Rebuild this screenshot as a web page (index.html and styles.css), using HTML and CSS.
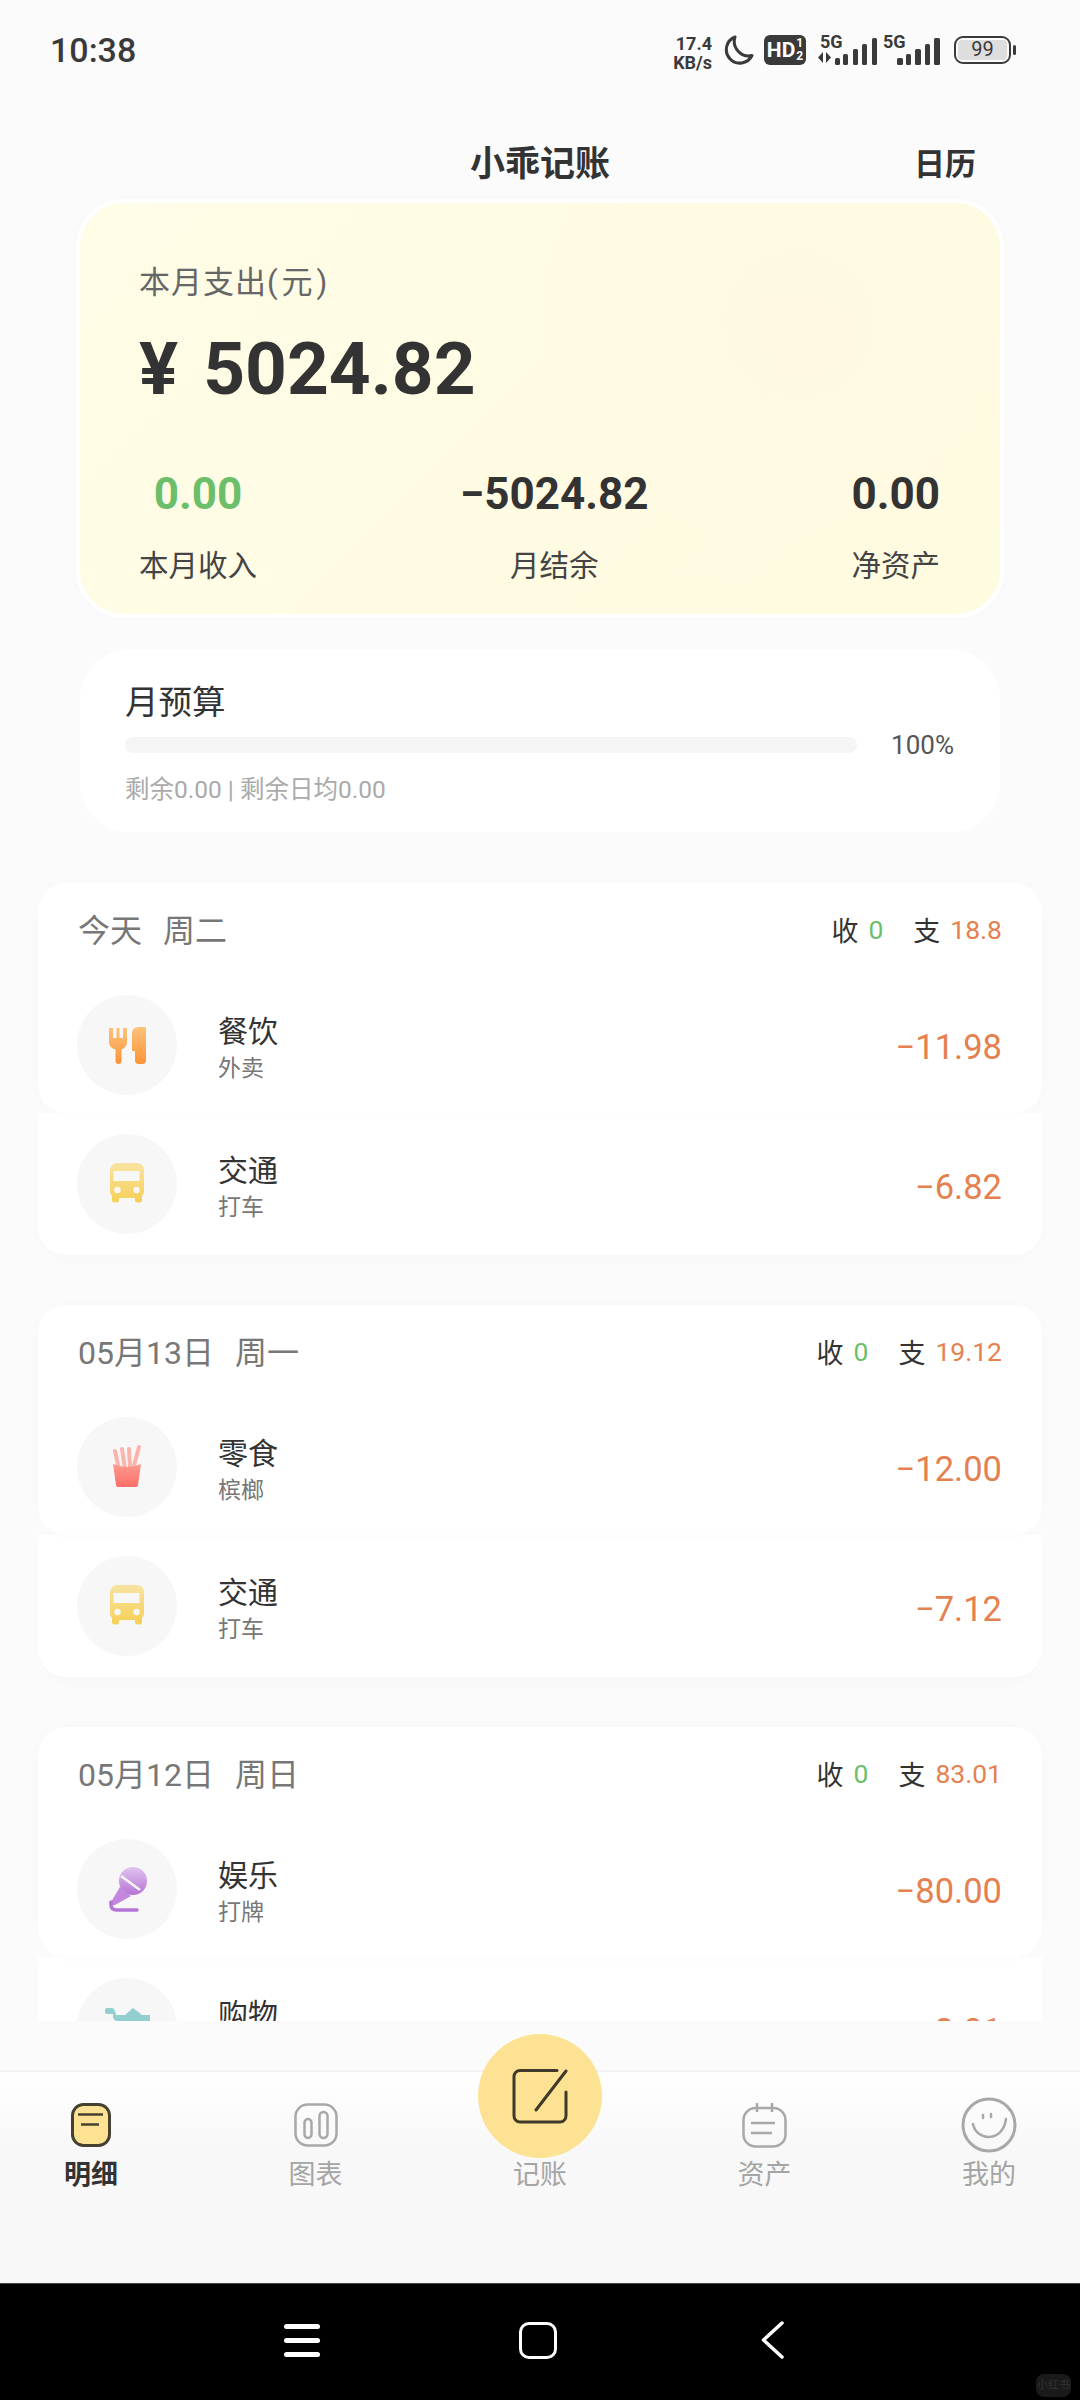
FILE: index.html
```html
<!DOCTYPE html>
<html lang="zh-CN">
<head>
    <meta charset="UTF-8">
    <meta name="viewport" content="width=device-width, initial-scale=1.0">
    <title>小乖记账</title>
    <link rel="stylesheet" href="styles.css">
</head>
<body>

<svg class="defs" width="0" height="0">
    <defs>
        <linearGradient id="grad-food" x1="0" y1="0" x2="0" y2="1"><stop offset="0" stop-color="#fdc27a"/><stop offset="1" stop-color="#fb9338"/></linearGradient>
        <linearGradient id="grad-bus" x1="0" y1="0" x2="0" y2="1"><stop offset="0" stop-color="#f8e3a2"/><stop offset="1" stop-color="#f6d25e"/></linearGradient>
        <linearGradient id="grad-fries" x1="0" y1="0" x2="0" y2="1"><stop offset="0" stop-color="#fd9a90"/><stop offset="1" stop-color="#fb6f68"/></linearGradient>
        <linearGradient id="grad-mic" x1="0" y1="0" x2="0" y2="1"><stop offset="0" stop-color="#e0c4ee"/><stop offset="1" stop-color="#b673d6"/></linearGradient>
        <symbol id="icon-bus" viewBox="0 0 100 100">
            <rect x="35" y="60" width="7" height="8.5" rx="2.5" fill="#f5d15c"/>
            <rect x="58" y="60" width="7" height="8.5" rx="2.5" fill="#f5d15c"/>
            <rect x="33" y="29" width="34" height="35" rx="7" fill="url(#grad-bus)"/>
            <rect x="36.5" y="37" width="26" height="10" fill="#f7f7f7"/>
            <circle cx="40.5" cy="56" r="3.2" fill="#f7f7f7"/>
            <circle cx="59.5" cy="56" r="3.2" fill="#f7f7f7"/>
        </symbol>
    </defs>
</svg>

<div class="status-bar">
    <span class="time">10:38</span>
    <div class="status-icons">
        <div class="speed"><span>17.4</span><span>KB/s</span></div>
        <svg class="moon" width="32" height="30" viewBox="0 0 32 30"><path d="M13 2A13.5 13.5 0 1 0 30 20.5 14.5 14.5 0 0 1 13 2z" fill="none" stroke="#3a3a3a" stroke-width="3" stroke-linejoin="round"/></svg>
        <div class="hd"><span>HD</span><span class="hd-nums"><i>1</i><i>2</i></span></div>
        <div class="signal sig-one">
            <span class="five-g">5G</span>
            <svg width="60" height="28" viewBox="0 0 60 28">
                <path d="M6 15v11l-5-5.500zM9 15v11l5-5.500z" fill="#3a3a3a"/>
                <rect x="18" y="21" width="5" height="7" rx="1.5" fill="#3a3a3a"/>
                <rect x="26" y="17" width="5" height="11" rx="1.5" fill="#3a3a3a"/>
                <rect x="36" y="12" width="5" height="16" rx="1.5" fill="#3a3a3a"/>
                <rect x="45" y="7" width="5" height="21" rx="1.5" fill="#3a3a3a"/>
                <rect x="55" y="1" width="5" height="27" rx="1.5" fill="#3a3a3a"/>
            </svg>
        </div>
        <div class="signal sig-two">
            <span class="five-g">5G</span>
            <svg width="43" height="28" viewBox="0 0 43 28">
                <rect x="0" y="21" width="6" height="7" rx="1.5" fill="#3a3a3a"/>
                <rect x="9" y="17" width="5" height="11" rx="1.5" fill="#3a3a3a"/>
                <rect x="18" y="12" width="6" height="16" rx="1.5" fill="#3a3a3a"/>
                <rect x="28" y="7" width="5" height="21" rx="1.5" fill="#3a3a3a"/>
                <rect x="37" y="1" width="6" height="27" rx="1.5" fill="#3a3a3a"/>
            </svg>
        </div>
        <div class="battery"><div class="battery-body"><span>99</span></div><div class="battery-nub"></div></div>
    </div>
</div>

<div class="top-bar">
    <span></span>
    <span class="app-title">小乖记账</span>
    <span class="calendar-link">日历</span>
</div>

<div class="hero-card">
    <div class="hero-label">本月支出<span class="paren">(元)</span></div>
    <div class="hero-amount"><span class="yen">¥</span>5024.82</div>
    <div class="hero-stats">
        <div class="stat"><div class="stat-num green">0.00</div><div class="stat-label">本月收入</div></div>
        <div class="stat"><div class="stat-num">−5024.82</div><div class="stat-label">月结余</div></div>
        <div class="stat"><div class="stat-num">0.00</div><div class="stat-label">净资产</div></div>
    </div>
</div>

<div class="budget-card">
    <div class="budget-title">月预算</div>
    <div class="budget-row">
        <div class="budget-bar"></div>
        <span class="budget-pct">100%</span>
    </div>
    <div class="budget-sub">剩余0.00 | 剩余日均0.00</div>
</div>

<div class="list">

    <div class="day">
        <div class="day-top">
            <div class="day-head">
                <div class="day-date"><span>今天</span><span>周二</span></div>
                <div class="day-sum"><span>收</span><span class="sum-in">0</span><span class="sum-out-label">支</span><span class="sum-out">18.8</span></div>
            </div>
            <div class="row">
                <div class="cat-icon">
                    <svg width="100" height="100" viewBox="0 0 100 100"><path d="M32 33h4v10h3.500V33h3v10H46V33h4v14c0 4-3 6.500-5.500 7.500V66a3 3 0 0 1-6 0V54.500C35 53.500 32 51 32 47z" fill="url(#grad-food)"/><path d="M55 38c0-4 3-6 8-6h5a1 1 0 0 1 1 1v32a4 4 0 0 1-4 4h-3a4 4 0 0 1-4-4V56h-3z" fill="url(#grad-food)"/></svg>
                </div>
                <div class="row-text"><div class="row-name">餐饮</div><div class="row-sub">外卖</div></div>
                <div class="row-amount">−11.98</div>
            </div>
        </div>
        <div class="day-bottom">
            <div class="row">
                <div class="cat-icon"><svg width="100" height="100"><use href="#icon-bus"/></svg></div>
                <div class="row-text"><div class="row-name">交通</div><div class="row-sub">打车</div></div>
                <div class="row-amount">−6.82</div>
            </div>
        </div>
    </div>

    <div class="day">
        <div class="day-top">
            <div class="day-head">
                <div class="day-date"><span>05月13日</span><span>周一</span></div>
                <div class="day-sum"><span>收</span><span class="sum-in">0</span><span class="sum-out-label">支</span><span class="sum-out">19.12</span></div>
            </div>
            <div class="row">
                <div class="cat-icon">
                    <svg width="100" height="100" viewBox="0 0 100 100"><g stroke="#fab4ae" stroke-width="4" stroke-linecap="round" fill="none"><path d="M38 34l4 18"/><path d="M45 32l3 20"/><path d="M52 32l1 20"/><path d="M62 30l-6 22"/></g><path d="M36 47q14 6 28 0l-3 21a2 2 0 0 1-2 2H41a2 2 0 0 1-2-2z" fill="url(#grad-fries)"/></svg>
                </div>
                <div class="row-text"><div class="row-name">零食</div><div class="row-sub">槟榔</div></div>
                <div class="row-amount">−12.00</div>
            </div>
        </div>
        <div class="day-bottom">
            <div class="row">
                <div class="cat-icon"><svg width="100" height="100"><use href="#icon-bus"/></svg></div>
                <div class="row-text"><div class="row-name">交通</div><div class="row-sub">打车</div></div>
                <div class="row-amount">−7.12</div>
            </div>
        </div>
    </div>

    <div class="day">
        <div class="day-top">
            <div class="day-head">
                <div class="day-date"><span>05月12日</span><span>周日</span></div>
                <div class="day-sum"><span>收</span><span class="sum-in">0</span><span class="sum-out-label">支</span><span class="sum-out">83.01</span></div>
            </div>
            <div class="row">
                <div class="cat-icon">
                    <svg width="100" height="100" viewBox="0 0 100 100"><circle cx="56" cy="42" r="14" fill="url(#grad-mic)"/><path d="M44 37l19 14" stroke="#f7f7f7" stroke-width="2.500"/><path d="M43 48l11 9-16 9q-4 1-4-3z" fill="#c388de"/><path d="M34 63v3q0 5 6 5h20" fill="none" stroke="#b673d6" stroke-width="3.500" stroke-linecap="round"/></svg>
                </div>
                <div class="row-text"><div class="row-name">娱乐</div><div class="row-sub">打牌</div></div>
                <div class="row-amount">−80.00</div>
            </div>
        </div>
        <div class="day-bottom">
            <div class="row">
                <div class="cat-icon">
                    <svg width="100" height="100" viewBox="0 0 100 100"><path d="M28 32a2 2 0 0 1 2-2h5q2 0 3 3l1 4h9l8-7 9 7h8v6H40q-3 0-4-4v-3h-6a2 2 0 0 1-2-2z" fill="#93cfd0"/></svg>
                </div>
                <div class="row-text"><div class="row-name">购物</div><div class="row-sub">&nbsp;</div></div>
                <div class="row-amount">−3.01</div>
            </div>
        </div>
    </div>

</div>

<div class="tab-bar">
    <div class="tab active">
        <div class="tab-icon">
            <svg width="40" height="44" viewBox="0 0 40 44"><rect x="1.500" y="1.500" width="37" height="41" rx="11" fill="#fde293" stroke="#45402f" stroke-width="3"/><path d="M7 11.500h25M10 21.500h18" stroke="#45402f" stroke-width="2.500"/></svg>
        </div>
        <span>明细</span>
    </div>
    <div class="tab">
        <div class="tab-icon">
            <svg width="44" height="44" viewBox="0 0 44 44"><rect x="1.500" y="1.500" width="41" height="41" rx="12" fill="none" stroke="#a8a8a8" stroke-width="2.500"/><rect x="10.500" y="16" width="7" height="19" rx="3.500" fill="none" stroke="#a8a8a8" stroke-width="2.500"/><rect x="25.500" y="9" width="8" height="26" rx="4" fill="none" stroke="#a8a8a8" stroke-width="2.500"/></svg>
        </div>
        <span>图表</span>
    </div>
    <div class="tab">
        <div class="tab-icon">
            <div class="fab">
                <svg width="56" height="56" viewBox="0 0 56 56"><path d="M45 2.500H8a6 6 0 0 0-6 6V48a6 6 0 0 0 6 6H48a6 6 0 0 0 6-6V24" fill="none" stroke="#40392a" stroke-width="3" stroke-linecap="round"/><path d="M24 42L54 3" stroke="#40392a" stroke-width="3" stroke-linecap="round"/></svg>
            </div>
        </div>
        <span>记账</span>
    </div>
    <div class="tab">
        <div class="tab-icon">
            <svg width="45" height="46" viewBox="0 0 45 46"><rect x="1.500" y="6" width="42" height="38.500" rx="12" fill="none" stroke="#a8a8a8" stroke-width="2.500"/><path d="M15 1v9M30 1v9M9 21h24M9 31h21" stroke="#a8a8a8" stroke-width="2.500"/></svg>
        </div>
        <span>资产</span>
    </div>
    <div class="tab">
        <div class="tab-icon">
            <svg width="56" height="56" viewBox="0 0 56 56"><circle cx="28" cy="28" r="26" fill="none" stroke="#a8a8a8" stroke-width="3"/><path d="M12 27c3 17 30 19 33-5" fill="none" stroke="#a8a8a8" stroke-width="2.500" stroke-linecap="round"/><path d="M22 18v3M30 17v3" stroke="#a8a8a8" stroke-width="2.500" stroke-linecap="round"/></svg>
        </div>
        <span>我的</span>
    </div>
</div>

<div class="sys-nav">
    <div class="sys-menu"><i></i><i></i><i></i></div>
    <div class="sys-home"></div>
    <svg class="sys-back" width="24" height="38" viewBox="0 0 24 38"><path d="M22 2L3.500 19 22 36" fill="none" stroke="#fff" stroke-width="3.500" stroke-linecap="round" stroke-linejoin="round"/></svg>
    <span class="watermark">小红书</span>
</div>

</body>
</html>
```

FILE: styles.css
```css
* {
    box-sizing: border-box;
}
body {
    margin: 0;
    width: 1080px;
    height: 2400px;
    overflow: hidden;
    display: flex;
    flex-direction: column;
    background-color: #fbfbfb;
    color: #333;
    font-family: Roboto, "Noto Sans CJK SC", sans-serif;
}
.defs {
    position: absolute;
}

/* status bar */
.status-bar {
    height: 100px;
    flex: none;
    display: flex;
    justify-content: space-between;
    align-items: center;
    padding: 0 64px 0 50px;
}
.time {
    font-size: 34px;
    font-weight: 500;
    color: #3a3a3a;
}
.status-icons {
    display: flex;
    align-items: center;
    color: #3a3a3a;
}
.speed {
    display: flex;
    flex-direction: column;
    align-items: flex-end;
    font-size: 18px;
    font-weight: 700;
    line-height: 19px;
    margin-top: 6px;
    width: 42px;
}
.moon {
    margin-left: 10px;
}
.hd {
    display: flex;
    align-items: center;
    justify-content: center;
    width: 42px;
    height: 30px;
    margin-left: 10px;
    background-color: #3a3a3a;
    border-radius: 6px;
    color: #fff;
    font-size: 21px;
    font-weight: 700;
}
.hd-nums {
    display: flex;
    flex-direction: column;
    font-size: 12px;
    line-height: 13px;
    margin-left: 1px;
}
.hd-nums i {
    font-style: normal;
}
.signal {
    position: relative;
    display: flex;
    align-items: flex-end;
    height: 30px;
}
.sig-one {
    margin-left: 11px;
}
.sig-two {
    margin-left: 20px;
}
.five-g {
    position: absolute;
    top: -1px;
    font-size: 18px;
    font-weight: 700;
    line-height: 15px;
}
.sig-one .five-g {
    left: 3px;
}
.sig-two .five-g {
    left: -14px;
}
.battery {
    display: flex;
    align-items: center;
    margin-left: 14px;
}
.battery-body {
    width: 57px;
    height: 28px;
    border: 2.500px solid #3a3a3a;
    border-radius: 9px;
    padding: 2px;
    display: flex;
}
.battery-body span {
    flex: 1;
    background-color: #dedede;
    border-radius: 4px;
    text-align: center;
    font-size: 20px;
    line-height: 19px;
}
.battery-nub {
    width: 3px;
    height: 10px;
    margin-left: 2px;
    background-color: #3a3a3a;
    border-radius: 2px;
}

/* top bar */
.top-bar {
    height: 99px;
    flex: none;
    display: grid;
    grid-template-columns: 1fr auto 1fr;
    padding-top: 42px;
    line-height: 46px;
}
.app-title {
    font-size: 35px;
    font-weight: 700;
    color: #333;
}
.calendar-link {
    justify-self: end;
    margin-right: 104px;
    font-size: 31px;
    font-weight: 700;
}

/* month summary */
.hero-card {
    flex: none;
    height: 419px;
    margin: 0 76px;
    padding: 60px 60px 0 59px;
    border: 4px solid #fff;
    border-radius: 48px;
    background: radial-gradient(circle at 78% 30%, #fff9e2 0, rgba(255, 249, 226, 0) 38%), linear-gradient(135deg, #fffce7, #fffbe0);
    box-shadow: 0 0 10px rgba(0, 0, 0, 0.02);
}
.hero-label {
    font-size: 31px;
    letter-spacing: 1px;
    line-height: 40px;
    color: #666;
}
.paren {
    letter-spacing: 4px;
}
.hero-amount {
    margin-top: 24px;
    font-size: 73px;
    font-weight: 700;
    line-height: 84px;
    color: #333;
}
.yen {
    margin-right: 25px;
}
.hero-stats {
    display: flex;
    justify-content: space-between;
    margin-top: 58px;
    text-align: center;
}
.stat-num {
    font-size: 44px;
    font-weight: 700;
    line-height: 50px;
    color: #333;
}
.stat-num.green {
    color: #6bbf6b;
}
.stat-label {
    margin-top: 27px;
    font-size: 29.500px;
    line-height: 40px;
    color: #444;
}

/* budget */
.budget-card {
    flex: none;
    height: 183px;
    margin: 31px 80px 0;
    padding: 32px 46px 0 45px;
    background-color: #fff;
    border-radius: 50px;
}
.budget-title {
    font-size: 33.500px;
    line-height: 44px;
    color: #333;
}
.budget-row {
    display: flex;
    justify-content: space-between;
    align-items: center;
    margin-top: 4px;
}
.budget-bar {
    width: 732px;
    height: 16px;
    background-color: #f5f5f5;
    border-radius: 8px;
}
.budget-pct {
    font-size: 26px;
    line-height: 32px;
    color: #555;
}
.budget-sub {
    margin-top: 13px;
    font-size: 24.500px;
    line-height: 32px;
    color: #aaa;
}

/* day lists */
.list {
    flex: none;
    height: 1138px;
    margin-top: 51px;
    padding: 0 38px;
    overflow: hidden;
}
.day {
    margin-bottom: 50px;
}
.day-top {
    position: relative;
    background-color: #fff;
    border-radius: 28px;
    box-shadow: 0 0 14px rgba(0, 0, 0, 0.02);
}
.day-bottom {
    background-color: #fff;
    border-radius: 0 0 28px 28px;
    box-shadow: 0 6px 14px rgba(0, 0, 0, 0.015);
}
.day-head {
    height: 93px;
    display: flex;
    justify-content: space-between;
    align-items: center;
    padding: 0 40px 0 40px;
}
.day-date {
    display: flex;
    gap: 21px;
    font-size: 32px;
    color: #777;
    margin-top: -4px;
}
.day-sum {
    display: flex;
    align-items: center;
    font-size: 27px;
    color: #333;
}
.sum-in {
    margin-left: 10px;
    font-size: 26.500px;
    color: #6bbf6b;
}
.sum-out-label {
    margin-left: 30px;
}
.sum-out {
    margin-left: 10px;
    font-size: 26.500px;
    color: #e5804f;
}
.row {
    height: 137px;
    display: flex;
    align-items: center;
    padding: 0 40px 0 39px;
}
.day-bottom .row {
    height: 142px;
}
.cat-icon {
    width: 100px;
    height: 100px;
    flex: none;
    background-color: #f7f7f7;
    border-radius: 50%;
}
.cat-icon svg {
    display: block;
}
.row-text {
    flex: 1;
    margin-left: 41px;
    padding-top: 8px;
}
.row-name {
    font-size: 30px;
    line-height: 38px;
    color: #333;
}
.row-sub {
    margin-top: 2px;
    font-size: 23px;
    line-height: 32px;
    color: #777;
}
.row-amount {
    padding-top: 5px;
    font-size: 34.500px;
    color: #e5804f;
}

/* bottom tabs */
.tab-bar {
    flex: none;
    height: 213px;
    margin-top: 49px;
    padding: 25px 41px 0;
    display: flex;
    justify-content: space-between;
    border-top: 2px solid #f3f3f3;
    background: linear-gradient(#fff, #f8f8f8 35%);
}
.tab {
    width: 100px;
    display: flex;
    flex-direction: column;
    align-items: center;
    font-size: 27px;
    line-height: 36px;
    color: #a5a5a5;
}
.tab.active {
    color: #333;
    font-weight: 700;
}
.tab-icon {
    position: relative;
    height: 56px;
    margin-bottom: 4px;
    display: flex;
    align-items: center;
    justify-content: center;
}
.tab-icon svg {
    display: block;
}
.fab {
    position: absolute;
    top: -63px;
    left: -62px;
    width: 124px;
    height: 124px;
    display: flex;
    align-items: center;
    justify-content: center;
    background-color: #fde293;
    border-radius: 50%;
}

/* android nav */
.sys-nav {
    position: relative;
    flex: 1;
    display: flex;
    align-items: center;
    padding: 0 0 4px 284px;
    background-color: #000;
    border-top: 1px solid #444;
}
.sys-menu {
    width: 36px;
    display: flex;
    flex-direction: column;
    gap: 9px;
}
.sys-menu i {
    height: 5px;
    background-color: #fff;
    border-radius: 3px;
}
.sys-home {
    width: 38px;
    height: 37px;
    margin-left: 199px;
    border: 3.500px solid #fff;
    border-radius: 10px;
}
.sys-back {
    margin-left: 203px;
}
.watermark {
    position: absolute;
    right: 9px;
    bottom: 3px;
    width: 35px;
    height: 23px;
    background-color: #1a1a1a;
    border-radius: 8px;
    color: #333;
    font-size: 11px;
    line-height: 23px;
    text-align: center;
}
```
